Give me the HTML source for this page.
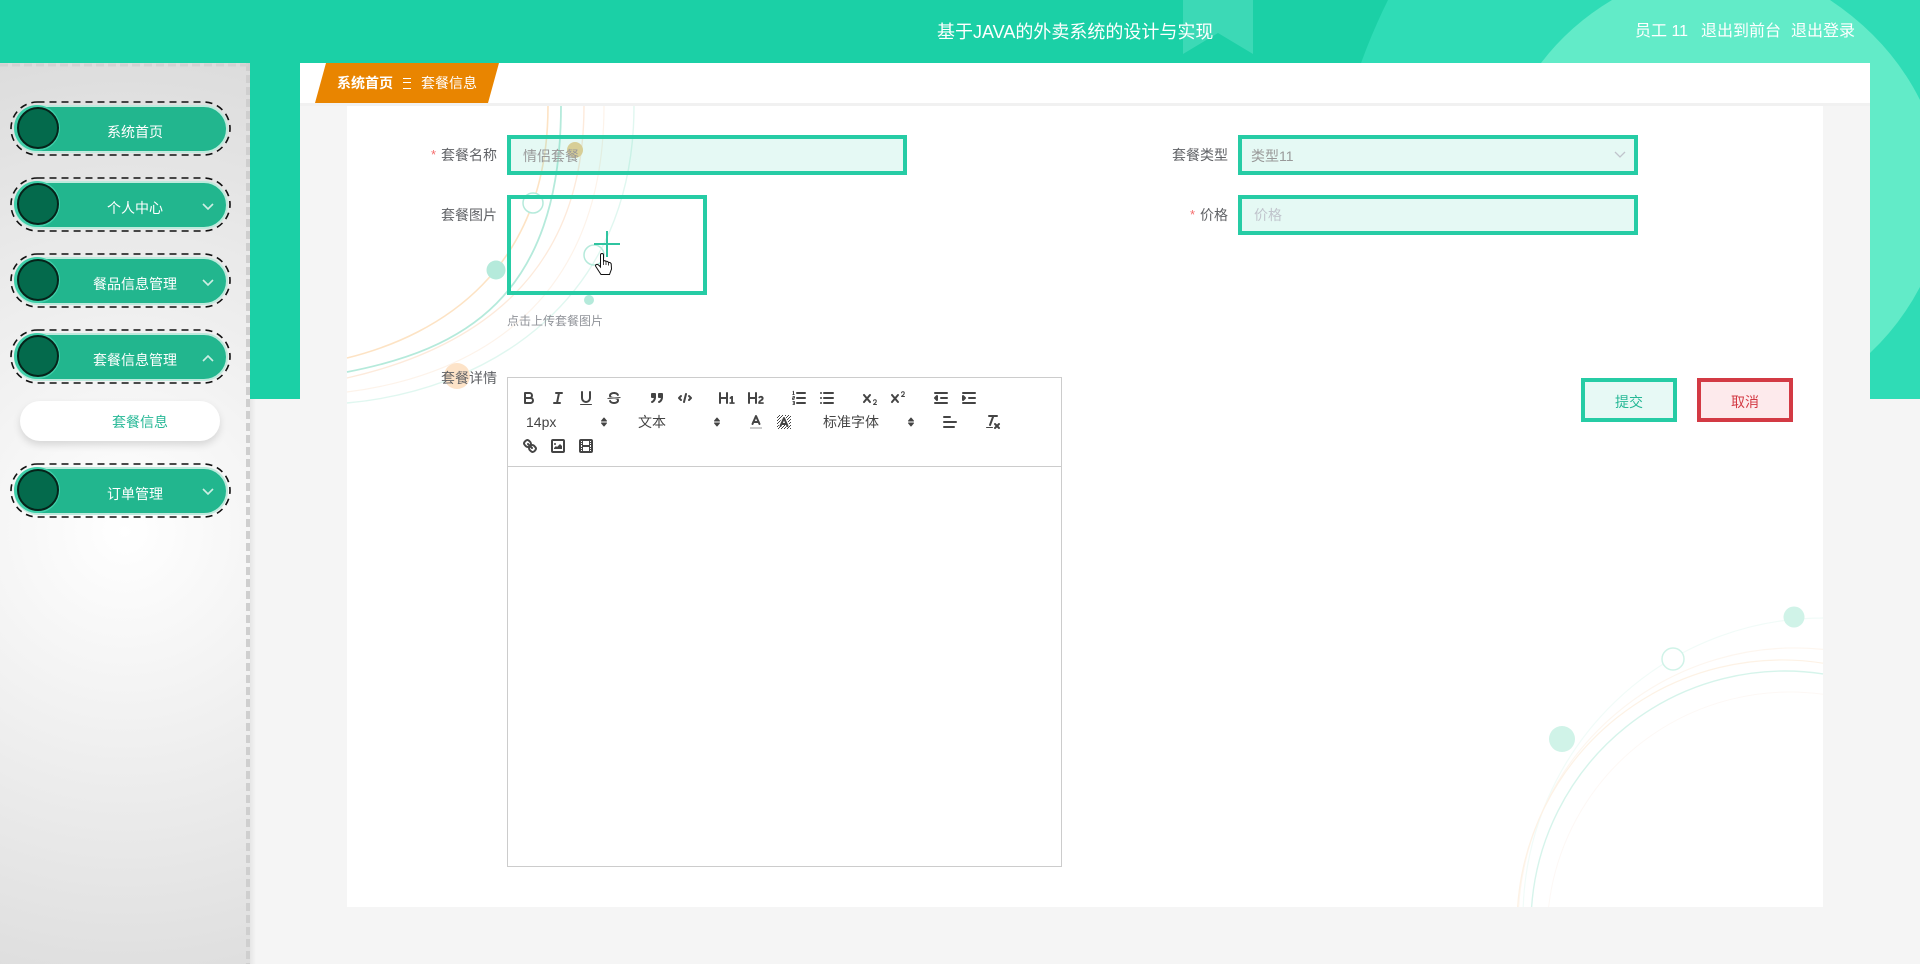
<!DOCTYPE html>
<html lang="zh"><head><meta charset="utf-8"><title>套餐信息</title>
<style>
html,body{margin:0;padding:0;width:1920px;height:964px;overflow:hidden;background:#f5f5f5;font-family:"Liberation Sans","Noto Sans CJK SC",sans-serif;}
.a{position:absolute;}
.t{position:absolute;white-space:nowrap;line-height:20px;height:20px;font-size:14px;}
.lb{color:#606266;}
.req{color:#f56c6c;}
.inp{position:absolute;box-sizing:border-box;height:40px;border:4px solid #26cca5;background:rgba(38,204,165,.12);}
.pill{position:absolute;left:14px;width:214px;height:48px;box-sizing:border-box;border:2px solid #bfeadd;border-radius:24px;background:#22b68e;}
.dot{position:absolute;left:17px;width:42px;height:42px;box-sizing:border-box;border:2px solid #06231a;border-radius:50%;background:#046a4c;box-shadow:-1px 0 0 2px #3fcfa9;}
.mt{position:absolute;white-space:nowrap;line-height:20px;font-size:14px;color:#fff;text-align:center;left:35px;width:200px;}
svg{position:absolute;left:0;top:0;}
.s{fill:none;stroke:#444;stroke-width:2;stroke-linecap:round;stroke-linejoin:round;}
.st{fill:none;stroke:#444;stroke-width:1;}
.f{fill:#444;stroke:none;}
.fs{fill:#444;stroke:#444;stroke-width:2;stroke-linejoin:round;}
</style></head>
<body>
<!-- green band -->
<svg width="1920" height="399" viewBox="0 0 1920 399" style="background:#1bd0a6">
  <path d="M1183 0H1253V54L1218 33L1183 54Z" fill="#3cd9b6"/>
  <path d="M1388,0 A600 600 0 0 0 1340,399 L1920,399 L1920,0 Z" fill="#2fdcb6"/>
  <path d="M1612,0 Q1570,25 1541,63 L1870,353 Q1900,325 1920,287 L1920,100 Q1890,40 1830,0 Z" fill="#62ebc8"/>
</svg>
<div class="a" style="left:300px;top:103px;width:1570px;height:296px;background:#f5f5f5"></div>
<div class="a" style="left:250px;top:399px;width:1670px;height:565px;background:#f5f5f5"></div>

<!-- sidebar -->
<div class="a" style="left:0;top:63px;width:250px;height:901px;background:radial-gradient(circle at 50% 52%,#fff 0,#dcdcdc 100%)"></div>
<div class="a" style="left:250px;top:399px;width:6px;height:565px;background:linear-gradient(90deg,#e6e6e6,#f5f5f5)"></div>
<svg width="260" height="964" viewBox="0 0 260 964">
  <line x1="248" y1="63" x2="248" y2="964" stroke="#cfcfcf" stroke-width="4" stroke-dasharray="8 4"/>
  <line x1="0" y1="65" x2="250" y2="65" stroke="#d2d2d2" stroke-width="3" stroke-dasharray="8 4"/>
</svg>

<div class="pill" style="top:105px"></div>
<div class="pill" style="top:181px"></div>
<div class="pill" style="top:257px"></div>
<div class="pill" style="top:333px"></div>
<div class="pill" style="top:467px"></div>
<div class="dot" style="top:107px"></div>
<div class="dot" style="top:183px"></div>
<div class="dot" style="top:259px"></div>
<div class="dot" style="top:335px"></div>
<div class="dot" style="top:469px"></div>
<div class="mt" style="top:122px">系统首页</div>
<div class="mt" style="top:198px">个人中心</div>
<div class="mt" style="top:274px">餐品信息管理</div>
<div class="mt" style="top:350px">套餐信息管理</div>
<div class="mt" style="top:484px">订单管理</div>
<div class="a" style="left:20px;top:401px;width:200px;height:40px;border-radius:20px;background:#fff;box-shadow:0 4px 8px rgba(0,0,0,.13)"></div>
<div class="t" style="left:112px;top:412px;color:#26b896">套餐信息</div>
<svg width="260" height="600" viewBox="0 0 260 600">
  <g fill="none" stroke="#111" stroke-width="1.6" stroke-dasharray="7 5">
    <rect x="11" y="102" width="219" height="53" rx="26.5"/>
    <rect x="11" y="178" width="219" height="53" rx="26.5"/>
    <rect x="11" y="254" width="219" height="53" rx="26.5"/>
    <rect x="11" y="330" width="219" height="53" rx="26.5"/>
    <rect x="11" y="464" width="219" height="53" rx="26.5"/>
  </g>
  <g fill="none" stroke="#cfeee4" stroke-width="1.6">
    <polyline points="203,204 208,209 213,204"/>
    <polyline points="203,280 208,285 213,280"/>
    <polyline points="203,361 208,356 213,361"/>
    <polyline points="203,489 208,494 213,489"/>
  </g>
</svg>

<!-- breadcrumb bar -->
<div class="a" style="left:300px;top:63px;width:1570px;height:40px;background:#fff"></div>
<div class="a" style="left:300px;top:103px;width:1570px;height:3px;background:#f1f1f1"></div>
<div class="a" style="left:347px;top:106px;width:1476px;height:801px;background:#fff"></div>
<svg width="520" height="110" viewBox="0 0 520 110"><polygon points="326,63 499,63 488,103 315,103" fill="#e98500"/></svg>
<div class="t" style="left:337px;top:73px;color:#fff;font-weight:bold">系统首页</div>
<div class="a" style="left:403px;top:78px;width:8px;height:1px;background:#fff;box-shadow:0 4px 0 #fff,0 10px 0 #fff"></div>
<div class="t" style="left:421px;top:73px;color:#fff">套餐信息</div>

<!-- header text -->
<div class="t" style="left:937px;top:21px;height:22px;line-height:22px;font-size:18px;color:#fff">基于JAVA的外卖系统的设计与实现</div>
<div class="t" style="left:1635px;top:22px;font-size:16px;color:#fff">员工 11</div>
<div class="t" style="left:1701px;top:22px;font-size:16px;color:#fff">退出到前台</div>
<div class="t" style="left:1791px;top:22px;font-size:16px;color:#fff">退出登录</div>

<!-- ornaments -->
<svg width="1920" height="964" viewBox="0 0 1920 964">
  <defs>
    <pattern id="hatch" width="3" height="3" patternUnits="userSpaceOnUse"><rect width="1" height="1" fill="#444"/><rect x="2" y="1" width="1" height="1" fill="#444"/><rect x="1" y="2" width="1" height="1" fill="#444"/></pattern>
  </defs>
  <g fill="none">
    <path d="M347,358 C440,335 548,270 548,106" stroke="#fde3c4" stroke-width="1.6"/>
    <path d="M347,372 C460,350 561,300 561,106" stroke="#b5eadb" stroke-width="1.8"/>
    <path d="M347,378 C470,350 584,280 584,106" stroke="#fdeadb" stroke-width="1.4"/>
    <path d="M347,392 C480,375 604,300 604,106" stroke="#fdf3ea" stroke-width="1.2"/>
    <path d="M347,403 C490,390 634,300 634,106" stroke="#e0f7f0" stroke-width="1.4"/>
    <circle cx="575" cy="150" r="8" fill="#f0cf95" stroke="none"/>
    <circle cx="496" cy="270" r="9.5" fill="#b5eadb" stroke="none"/>
    <circle cx="589" cy="300" r="5" fill="#b5eadb" stroke="none"/>
    <circle cx="533" cy="203" r="10" stroke="#b5eadb" stroke-width="1.5" fill="#fff"/>
    <circle cx="594" cy="255" r="10" stroke="#b5eadb" stroke-width="1.5"/>
    <circle cx="457" cy="376" r="13" fill="#fde3c8" stroke="none"/>

    <path d="M1523.2,907 A300 300 0 0 1 1823,618" stroke="#f1fbf8" stroke-width="1.2"/>
    <path d="M1518.6,907 A277 277 0 0 1 1823,649.4" stroke="#fdf6ef" stroke-width="1.2"/>
    <path d="M1517.6,907 A265 265 0 0 1 1823,663.2" stroke="#fdf2e5" stroke-width="1.2"/>
    <path d="M1531.6,907 A254 254 0 0 1 1823,673.9" stroke="#d6f4eb" stroke-width="1.4"/>
    <path d="M1548.6,907 A243 243 0 0 1 1823,694.3" stroke="#fdf8f5" stroke-width="1"/>
    <circle cx="1562" cy="739" r="13" fill="#d0f3e8" stroke="none"/>
    <circle cx="1794" cy="617" r="10.5" fill="#d0f3e8" stroke="none"/>
    <circle cx="1673" cy="659" r="11" stroke="#d0f3e8" stroke-width="1.5" fill="#fff"/>
  </g>
</svg>

<!-- form -->
<div class="t req" style="left:431px;top:145px;font-size:13px">*</div>
<div class="t lb" style="left:441px;top:145px">套餐名称</div>
<div class="inp" style="left:507px;top:135px;width:400px"></div>
<div class="t" style="left:523px;top:146px;color:#999">情侣套餐</div>

<div class="t lb" style="left:441px;top:205px">套餐图片</div>
<div class="a" style="left:507px;top:195px;width:200px;height:100px;box-sizing:border-box;border:4px solid #26cca5"></div>
<div class="a" style="left:594px;top:243px;width:26px;height:2px;background:#2fc4a0"></div>
<div class="a" style="left:606px;top:231px;width:2px;height:26px;background:#2fc4a0"></div>
<div class="t" style="left:507px;top:311px;font-size:12px;color:#909399">点击上传套餐图片</div>

<div class="t lb" style="left:441px;top:368px">套餐详情</div>

<div class="t lb" style="left:1172px;top:145px">套餐类型</div>
<div class="inp" style="left:1238px;top:135px;width:400px"></div>
<div class="t" style="left:1251px;top:146px;color:#999">类型11</div>
<div class="t req" style="left:1190px;top:205px;font-size:13px">*</div>
<div class="t lb" style="left:1200px;top:205px">价格</div>
<div class="inp" style="left:1238px;top:195px;width:400px"></div>
<div class="t" style="left:1254px;top:205px;color:#c0c4cc">价格</div>

<div class="a" style="left:1581px;top:378px;width:96px;height:44px;box-sizing:border-box;border:4px solid #26cca5;background:#e7f9f5"></div>
<div class="t" style="left:1615px;top:392px;color:#26b896">提交</div>
<div class="a" style="left:1697px;top:378px;width:96px;height:44px;box-sizing:border-box;border:4px solid #d33a44;background:#fdeaec"></div>
<div class="t" style="left:1731px;top:392px;color:#d33a44">取消</div>

<!-- editor -->
<div class="a" style="left:507px;top:377px;width:555px;height:490px;box-sizing:border-box;border:1px solid #ccc;background:#fff"></div>
<div class="a" style="left:507px;top:466px;width:555px;height:1px;background:#ccc"></div>
<div class="t" style="left:526px;top:412px;color:#444">14px</div>
<div class="t" style="left:638px;top:412px;color:#444">文本</div>
<div class="t" style="left:823px;top:412px;color:#444">标准字体</div>

<svg width="1920" height="964" viewBox="0 0 1920 964">
  <!-- select chevron -->
  <polyline points="1615,152 1620,157 1625,152" fill="none" stroke="#c0c4cc" stroke-width="1.3"/>

  <!-- B -->
  <g transform="translate(520,389)"><path class="s" d="M5,4H9.5A2.5,2.5,0,0,1,12,6.5v0A2.5,2.5,0,0,1,9.5,9H5V4Z"/><path class="s" d="M5,9h5.5A2.5,2.5,0,0,1,13,11.5v0A2.5,2.5,0,0,1,10.5,14H5V9Z"/></g>
  <!-- I -->
  <g transform="translate(549,389)"><path class="s" d="M7,4H13M5,14H11M8,14L10,4"/></g>
  <!-- U -->
  <g transform="translate(577,389)"><path class="s" d="M5,3V9a4.012,4.012,0,0,0,4,4H9a4.012,4.012,0,0,0,4-4V3"/><rect class="f" x="3" y="15" width="12" height="1" rx=".5"/></g>
  <!-- S -->
  <g transform="translate(605,389)"><line class="st" x1="15.5" x2="2.5" y1="8.5" y2="9.5"/><path class="f" d="M9.007,8C6.542,7.791,6,7.519,6,6.5,6,5.792,7.283,5,9,5c1.571,0,2.765.679,2.969,1.309a1,1,0,0,0,1.9-.617C13.356,4.106,11.354,3,9,3,6.2,3,4,4.538,4,6.5a3.2,3.2,0,0,0,.5,1.843Z"/><path class="f" d="M8.984,10C11.457,10.208,12,10.479,12,11.5c0,0.708-1.283,1.5-3,1.5-1.571,0-2.765-.679-2.969-1.309a1,1,0,1,0-1.9.617C4.644,13.894,6.646,15,9,15c2.8,0,5-1.538,5-3.5a3.2,3.2,0,0,0-.5-1.843Z"/></g>
  <!-- quote -->
  <g transform="translate(648,389)"><rect class="fs" x="4" y="5" width="3" height="3"/><rect class="fs" x="11" y="5" width="3" height="3"/><path class="s" d="M7,8c0,4.031-3,5-3,5M14,8c0,4.031-3,5-3,5"/></g>
  <!-- code -->
  <g transform="translate(676,389)"><polyline class="s" points="5 7 3 9 5 11"/><polyline class="s" points="13 7 15 9 13 11"/><line class="s" x1="10" x2="8" y1="5" y2="13"/></g>
  <!-- H1 -->
  <g transform="translate(718,389)"><path class="f" d="M10,4V14a1,1,0,0,1-2,0V10H3v4a1,1,0,0,1-2,0V4A1,1,0,0,1,3,4V8H8V4a1,1,0,0,1,2,0Zm6.06787,9.209H14.98975V7.59863a.54085.54085,0,0,0-.605-.60547h-.62744a1.01119,1.01119,0,0,0-.748.29688L11.645,8.56641a.5435.5435,0,0,0-.022.8584l.28613.30762a.53861.53861,0,0,0,.84717.0332l.09912-.08789a1.2137,1.2137,0,0,0,.2417-.35254h.02246s-.01123.30859-.01123.60547V13.209H12.041a.54085.54085,0,0,0-.605.60547v.43945a.54085.54085,0,0,0,.605.60547h4.02686a.54085.54085,0,0,0,.605-.60547v-.43945A.54085.54085,0,0,0,16.06787,13.209Z"/></g>
  <!-- H2 -->
  <g transform="translate(747,389)"><path class="f" d="M16.73975,13.81445v.43945a.54085.54085,0,0,1-.605.60547H11.855a.58392.58392,0,0,1-.64893-.60547V14.0127c0-2.90527,3.39941-3.42187,3.39941-4.55469a.77675.77675,0,0,0-.84717-.78125,1.17684,1.17684,0,0,0-.83594.38477c-.2749.26367-.561.374-.85791.13184l-.4292-.34082c-.30811-.24219-.38525-.51758-.1543-.81445a2.97155,2.97155,0,0,1,2.45361-1.17676,2.45393,2.45393,0,0,1,2.68408,2.40918c0,2.45312-3.1792,2.92676-3.27832,3.93848h2.79443A.54085.54085,0,0,1,16.73975,13.81445ZM9,3A.99974.99974,0,0,0,8,4V8H3V4A1,1,0,0,0,1,4V14a1,1,0,0,0,2,0V10H8v4a1,1,0,0,0,2,0V4A.99974.99974,0,0,0,9,3Z"/></g>
  <!-- ol -->
  <g transform="translate(790,389)"><path class="s" d="M7,4H15M7,9H15M7,14H15"/><path fill="none" stroke="#444" stroke-width="1" d="M2.5,5.5H4.5M3.5,5.5V2.5L2.7,3M2.6,7.6H4.4V9H2.6V10.4H4.4M2.6,12.6H4.4V14H3M4.4,14V15.4H2.6"/></g>
  <!-- ul -->
  <g transform="translate(818,389)"><path class="s" d="M6,4H15M6,9H15M6,14H15M3,4H3M3,9H3M3,14H3"/></g>
  <!-- sub -->
  <g transform="translate(861,389)"><path class="f" d="M15.5,15H13.861a3.858,3.858,0,0,0,1.914-2.975,1.8,1.8,0,0,0-1.6-1.751A1.921,1.921,0,0,0,12.021,11.7a0.50013,0.50013,0,1,0,.957.291h0a0.914,0.914,0,0,1,1.053-.725,0.81,0.81,0,0,1,.744.762c0,1.076-1.16971,1.86982-1.93971,2.43082A1.45639,1.45639,0,0,0,12,15.5a0.5,0.5,0,0,0,.5.5h3A0.5,0.5,0,0,0,15.5,15Z"/><path class="f" d="M9.65,5.241a1,1,0,0,0-1.409.108L6,7.964,3.759,5.349A1,1,0,0,0,2.192,6.59178Q2.2,6.6,2.241,6.651L4.684,9.5,2.241,12.35A1,1,0,0,0,3.71,13.70722q0.04184-.04451.082-0.09082L6,11.036l2.241,2.616a1,1,0,0,0,1.567-1.24277Q9.8,12.4,9.759,12.35L7.316,9.5,9.759,6.651A1,1,0,0,0,9.65,5.241Z"/></g>
  <!-- sup -->
  <g transform="translate(889,389)"><path class="f" d="M15.5,7H13.861a4.015,4.015,0,0,0,1.914-2.975,1.8,1.8,0,0,0-1.6-1.751A1.922,1.922,0,0,0,12.021,3.7a0.5,0.5,0,1,0,.957.291,0.917,0.917,0,0,1,1.053-.725,0.81,0.81,0,0,1,.744.762c0,1.077-1.164,1.925-1.934,2.486A1.423,1.423,0,0,0,12,7.5a0.5,0.5,0,0,0,.5.5h3A0.5,0.5,0,0,0,15.5,7Z"/><path class="f" d="M9.651,5.241a1,1,0,0,0-1.41.108L6,7.964,3.759,5.349a1,1,0,1,0-1.519,1.3L4.683,9.5,2.241,12.35a1,1,0,1,0,1.519,1.3L6,11.036l2.241,2.616a1,1,0,0,0,1.519-1.3L7.317,9.5,9.759,6.651A1,1,0,0,0,9.651,5.241Z"/></g>
  <!-- indent - -->
  <g transform="translate(932,389)"><path class="s" d="M3,14H15M3,4H15M9,9H15"/><polygon class="fs" points="5 7 5 11 3 9"/></g>
  <!-- indent + -->
  <g transform="translate(960,389)"><path class="s" d="M3,14H15M3,4H15M9,9H15"/><polygon class="fs" points="3 7 3 11 5 9"/></g>

  <!-- pickers -->
  <g fill="#444" stroke="#444" stroke-width="1" stroke-linejoin="round"><path d="M604,418l2.5,3h-5zM604,426l2.5,-3h-5z"/><path d="M717,418l2.5,3h-5zM717,426l2.5,-3h-5z"/><path d="M911,418l2.5,3h-5zM911,426l2.5,-3h-5z"/></g>

  <!-- color -->
  <g transform="translate(747,413)"><line x1="3" x2="15" y1="15" y2="15" stroke="#ccc" stroke-width="2"/><polyline class="s" points="5.5 11 9 3 12.5 11"/><line class="s" x1="11.63" x2="6.38" y1="9" y2="9"/></g>
  <!-- background -->
  <g transform="translate(775,413)"><rect x="2" y="2" width="14" height="14" fill="url(#hatch)"/><polyline fill="none" stroke="#fff" stroke-width="4" stroke-linejoin="round" points="5.5 13 9 5 12.5 13"/><polyline class="s" points="5.5 13 9 5 12.5 13"/><line class="s" x1="11.63" x2="6.38" y1="11" y2="11"/></g>
  <!-- align -->
  <g transform="translate(941,413)"><path class="s" d="M3,9H15M3,14H13M3,4H9"/></g>
  <!-- clean -->
  <g transform="translate(984,413)"><path class="s" d="M5,3H13M6,12L9.35,3M11,11L15,15M15,11L11,15"/><rect class="f" x="2" y="14" width="7" height="1" rx=".5"/></g>

  <!-- link -->
  <g transform="translate(521,437)"><line class="s" x1="7" x2="11" y1="7" y2="11"/><path class="s" d="M8.9,4.577a3.476,3.476,0,0,1,.36,4.679A3.476,3.476,0,0,1,4.577,8.9C3.185,7.5,2.035,6.4,4.217,4.217S7.5,3.185,8.9,4.577Z"/><path class="s" d="M13.423,9.1a3.476,3.476,0,0,0-4.679-.36,3.476,3.476,0,0,0,.36,4.679c1.392,1.392,2.5,2.542,4.679.36S14.815,10.5,13.423,9.1Z"/></g>
  <!-- image -->
  <g transform="translate(549,437)"><rect class="s" x="3" y="3" width="12" height="12" rx="1"/><polygon class="f" points="5 12 5 11 7 9 8 10 11 7 13 9 13 12"/><circle class="f" cx="6" cy="7" r="1"/></g>
  <!-- video -->
  <g transform="translate(577,437)"><rect class="s" x="3" y="3" width="12" height="12" rx="1"/><path class="f" d="M5,3h1v12h-1zM12,3h1v12h-1zM5,8h8v2h-8zM3,5h3v1h-3zM3,7h3v1h-3zM3,10h3v1h-3zM3,12h3v1h-3zM12,5h3v1h-3zM12,7h3v1h-3zM12,10h3v1h-3zM12,12h3v1h-3z"/></g>

  <!-- hand cursor -->
  <g transform="translate(595,253)"><path d="M5.5,2Q5.5,.5 7,.5Q8.5,.5 8.5,2L8.5,8Q10,7.2 11,8.4Q12.6,7.8 13.4,9.4Q15.2,9 16.2,10.8L16.5,16L14.5,21.5L6,21.5L.8,13.5Q0,12 1.5,11.5Q3,11 5.5,14Z" fill="#fff" stroke="#111" stroke-width="1"/><path d="M8.5,8V12M11,8.4V12M13.4,9.4V12.5" stroke="#111" stroke-width=".8" fill="none"/></g>
</svg>
</body></html>
